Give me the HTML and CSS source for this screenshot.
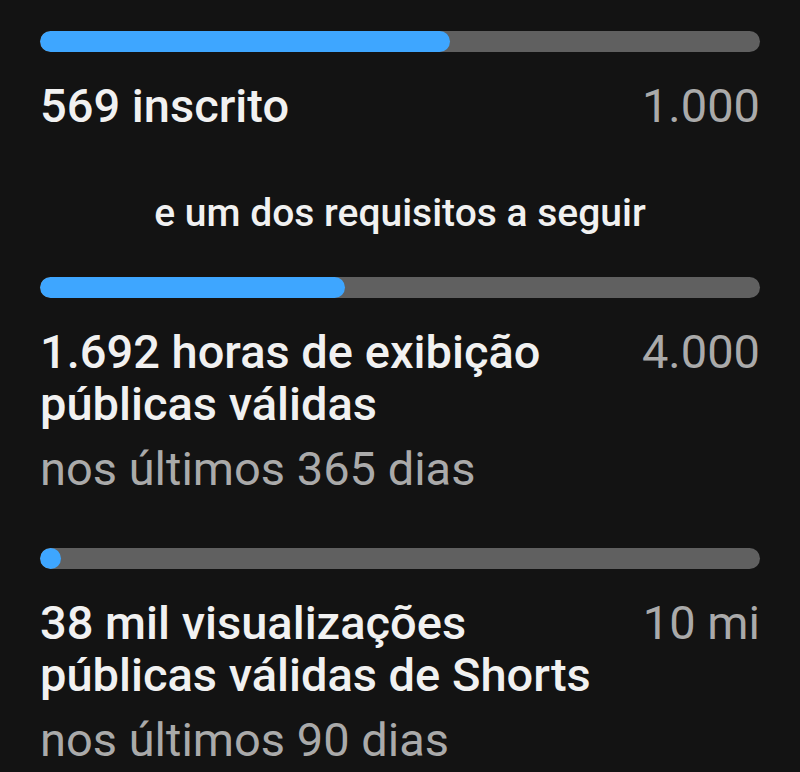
FILE: index.html
```html
<!DOCTYPE html>
<html lang="pt-BR">
<head>
    <meta charset="UTF-8">
    <meta name="viewport" content="width=device-width, initial-scale=1.0">
    <title>Requisitos</title>
    <link rel="stylesheet" href="styles.css">
</head>
<body>
    <div class="requirements">
        <div class="req">
            <div class="bar"><div class="fill" style="width: 56.9%"></div></div>
            <div class="row">
                <div class="label">569 inscrito</div>
                <div class="goal">1.000</div>
            </div>
        </div>

        <p class="intro">e um dos requisitos a seguir</p>

        <div class="req">
            <div class="bar"><div class="fill" style="width: 42.3%"></div></div>
            <div class="row">
                <div class="label">1.692 horas de exibição públicas válidas</div>
                <div class="goal">4.000</div>
            </div>
            <div class="sub">nos últimos 365 dias</div>
        </div>

        <div class="req">
            <div class="bar"><div class="fill" style="width: 0.38%"></div></div>
            <div class="row">
                <div class="label">38 mil visualizações públicas válidas de Shorts</div>
                <div class="goal">10 mi</div>
            </div>
            <div class="sub">nos últimos 90 dias</div>
        </div>
    </div>
</body>
</html>
```

FILE: styles.css
```css
body {
    font-family: Roboto, "Liberation Sans", sans-serif;
    background-color: #131313;
    color: #f1f1f1;
    margin: 0;
    padding: 0;
}
.requirements {
    padding: 31px 40px 0;
}
.bar {
    height: 21px;
    background-color: #606060;
    border-radius: 11px;
    overflow: hidden;
}
.fill {
    height: 100%;
    min-width: 21px;
    background-color: #3ea6ff;
    border-radius: 11px;
}
.row {
    display: flex;
    justify-content: space-between;
    gap: 40px;
    margin-top: 28px;
    font-size: 47px;
    line-height: 52px;
}
.label {
    font-weight: 500;
}
.goal {
    flex: none;
    color: #aaaaaa;
}
.sub {
    margin-top: 13px;
    font-size: 47px;
    line-height: 52px;
    color: #aaaaaa;
}
.req + .req {
    margin-top: 53px;
}
.intro {
    margin: 57px 0 40px;
    text-align: center;
    font-size: 39px;
    line-height: 48px;
    font-weight: 500;
}
```
